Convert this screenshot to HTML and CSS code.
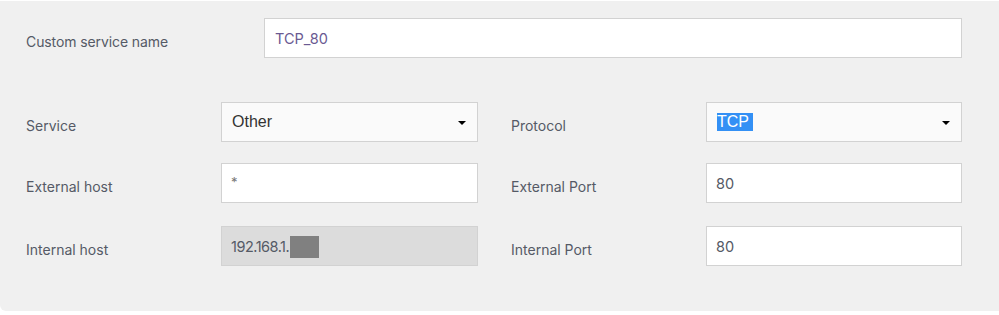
FILE: index.html
```html
<!DOCTYPE html>
<html lang="en">
<head>
    <meta charset="UTF-8">
    <title>Port forwarding</title>
    <link rel="stylesheet" href="styles.css">
</head>
<body>
    <div class="panel">
        <div class="row first">
            <label class="name-label">Custom service name</label>
            <div class="field wide"><span class="val purple">TCP_80</span></div>
        </div>
        <div class="row">
            <label class="lbl">Service</label>
            <div class="field select"><span class="opt">Other</span><i class="caret"></i></div>
            <label class="lbl right">Protocol</label>
            <div class="field select"><span class="opt sel">TCP</span><i class="caret"></i></div>
        </div>
        <div class="row">
            <label class="lbl">External host</label>
            <div class="field"><span class="val star">*</span></div>
            <label class="lbl right">External Port</label>
            <div class="field"><span class="val">80</span></div>
        </div>
        <div class="row last">
            <label class="lbl">Internal host</label>
            <div class="field disabled"><span class="val ip">192.168.1.</span><span class="mask"></span></div>
            <label class="lbl right">Internal Port</label>
            <div class="field"><span class="val">80</span></div>
        </div>
    </div>
</body>
</html>
```

FILE: styles.css
```css
* { margin: 0; padding: 0; box-sizing: border-box; }
html, body { height: 100%; }
body {
    background: #fff;
    font-family: "Inter", "Noto Sans", sans-serif;
}
.panel {
    margin-top: 1px;
    height: 310px;
    background: #f0f0f0;
    border-bottom-left-radius: 6px;
    padding: 17px 37px 0 26px;
}
.row {
    display: flex;
    align-items: center;
    margin-top: 21px;
}
.row.first { margin-top: 0; margin-bottom: 44px; }
.row.last { margin-top: 23px; }
.name-label, .lbl {
    font-size: 14px;
    color: #555a66;
    padding-top: 7px;
}
.name-label { width: 238px; letter-spacing: -0.1px; }
.lbl { width: 195px; }
.lbl.right { width: 228px; padding-left: 33px; }
.field {
    position: relative;
    display: flex;
    align-items: center;
    width: 257px;
    height: 40px;
    background: #fff;
    border: 1px solid #d2d2d2;
    padding-left: 9px;
}
.row .field:last-child { width: 256px; }
.field.wide { width: 698px !important; padding-left: 10px; }
.field.select { background: #fafafa; padding-left: 10px; }
.field.disabled { background: #dcdcdc; }
.val {
    font-size: 14.5px;
    color: #555a66;
}
.val.purple { color: #6a5a92; }
.val.ip { letter-spacing: -0.5px; }
.val.star { font-size: 13px; color: #777; margin-top: -2px; }
.opt {
    font-family: "Liberation Sans", Arial, sans-serif;
    font-size: 16px;
    color: #333;
    line-height: 18px;
}
.opt.sel {
    background: #3390f5;
    color: #fff;
    padding-right: 4px;
}
.caret {
    position: absolute;
    right: 11px;
    top: 18px;
    width: 0;
    height: 0;
    border-left: 4px solid transparent;
    border-right: 4px solid transparent;
    border-top: 4px solid #000;
}
.mask {
    display: inline-block;
    width: 29px;
    height: 22px;
    background: #808080;
    margin-left: 1px;
    margin-top: 2px;
}
```
